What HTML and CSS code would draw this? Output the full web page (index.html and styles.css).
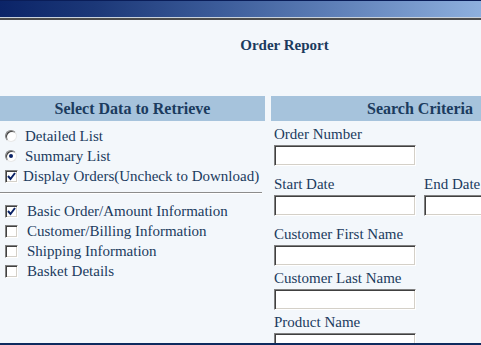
FILE: index.html
```html
<!DOCTYPE html>
<html>
<head>
<meta charset="utf-8" />
<title>Order Report</title>
<link rel="stylesheet" href="styles.css">
</head>
<body>
<div class="topbar"></div>

<div class="page">
	<h1 class="title">Order Report</h1>

	<div class="panels">
		<div class="panel left">
			<div class="head">Select Data to Retrieve</div>
			<div class="opts">
				<label class="opt"><span class="radio"></span>Detailed List</label>
				<label class="opt"><span class="radio on"></span>Summary List</label>
				<label class="opt tight"><span class="box"><svg width="9" height="9" viewBox="0 0 9 9"><polyline points="1,4 3.5,7 8,1" fill="none" stroke="#0a2266" stroke-width="2"/></svg></span>Display Orders(Uncheck to Download)</label>
			</div>
			<div class="sep"></div>
			<div class="opts">
				<label class="opt"><span class="box"><svg width="9" height="9" viewBox="0 0 9 9"><polyline points="1,4 3.5,7 8,1" fill="none" stroke="#0a2266" stroke-width="2"/></svg></span>Basic Order/Amount Information</label>
				<label class="opt"><span class="box"></span>Customer/Billing Information</label>
				<label class="opt"><span class="box"></span>Shipping Information</label>
				<label class="opt"><span class="box"></span>Basket Details</label>
			</div>
		</div>

		<div class="panel right">
			<div class="head">Search Criteria</div>
			<div class="fields">
				<div class="field wide">
					<div class="lbl">Order Number</div>
					<input class="txt" type="text" />
				</div>
				<div class="pair wide">
					<div class="field">
						<div class="lbl">Start Date</div>
						<input class="txt" type="text" />
					</div>
					<div class="field">
						<div class="lbl">End Date</div>
						<input class="txt" type="text" />
					</div>
				</div>
				<div class="field">
					<div class="lbl">Customer First Name</div>
					<input class="txt" type="text" />
				</div>
				<div class="field">
					<div class="lbl">Customer Last Name</div>
					<input class="txt" type="text" />
				</div>
				<div class="field">
					<div class="lbl">Product Name</div>
					<input class="txt" type="text" />
				</div>
			</div>
		</div>
	</div>
</div>

<div class="bottomline"></div>
</body>
</html>
```

FILE: styles.css
```css
html, body{margin:0; padding:0; overflow:hidden}
body{background:#f3f7fb; color:#1b3b5e; font-family:"Liberation Serif", "Times New Roman", serif; font-size:15px}

.topbar{height:16px; border-top:1px solid #0a1d58;
	background:linear-gradient(to right, #0b2468 0%, #1c3878 20%, #3b5b99 45%, #5f80b8 70%, #8eb0de 100%);
	border-bottom:1px solid #c9d2dc; box-shadow:0 2px 0 #4c4c4c}

.page{width:569px; padding-top:17px}
.title{margin:0; font-size:15px; line-height:20px; text-align:center; font-weight:bold; color:#1b3b5e}

.panels{display:flex; gap:6px; margin-top:41px}
.panel.left{width:265px; flex:none}
.panel.right{width:298px; flex:none}
.head{height:25px; line-height:25px; background:#a6c3dc; font-weight:bold; font-size:16px; text-align:center}

.opts{display:flex; flex-direction:column; padding-top:5px}
.opt{display:flex; align-items:center; height:20px; line-height:20px; white-space:nowrap}

.radio{width:10px; height:10px; margin:0 8px 0 5px; border-radius:50%; background:#fff; position:relative;
	border:1px solid; border-color:#808080 #e8e8e8 #e8e8e8 #808080; box-shadow:inset 1px 1px 0 #404040}
.radio.on::after{content:""; position:absolute; left:3px; top:3px; width:4px; height:4px; border-radius:50%; background:#0a2266}

.box{width:9px; height:9px; margin:0 9px 0 5px; background:#fff; display:flex; align-items:center; justify-content:center;
	border:1px solid; border-color:#808080 #fff #fff #808080; box-shadow:inset 1px 1px 0 #404040, inset -1px -1px 0 #d4d0c8; padding:1px}
.tight .box{margin-right:5px}

.sep{height:1px; width:262px; background:#8c8c8c; border-bottom:1px solid #fff; margin:6px 0 2px}

.fields{padding:3px 0 0 3px; display:flex; flex-direction:column; gap:2px}
.field{display:flex; flex-direction:column}
.wide{margin-bottom:6px}
.pair{display:flex; gap:8px}
.lbl{line-height:20px; white-space:nowrap}
.txt{width:142px; height:21px; box-sizing:border-box; margin:1px 0 0; padding:0; background:#fff;
	border:1px solid; border-color:#808080 #fff #fff #808080; box-shadow:inset 1px 1px 0 #404040, inset -1px -1px 0 #d4d0c8;
	font-family:"Liberation Serif", serif; font-size:15px}

.bottomline{position:fixed; left:0; right:0; bottom:0; height:2px; background:#0e2a5e}
```
